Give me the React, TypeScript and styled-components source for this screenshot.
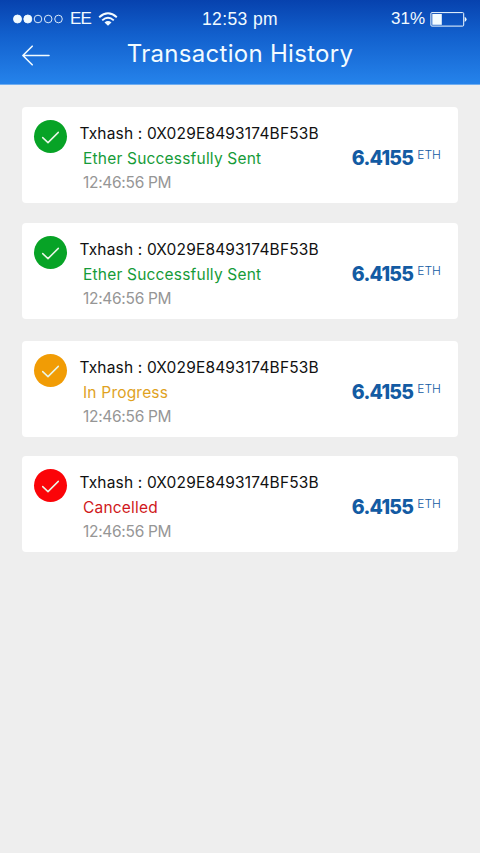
import React from "react";
import styled, { createGlobalStyle } from "styled-components";

const GlobalStyle = createGlobalStyle`
  * { box-sizing: border-box; }
  body { margin: 0; background: #eeeeee; }
`;

const Screen = styled.main`
  min-height: 853px;
  width: 480px;
  background: #eeeeee;
  font-family: Inter, "Liberation Sans", sans-serif;
`;

const Header = styled.header`
  height: 85px;
  background: linear-gradient(#0742ae 0%, #1260cd 42%, #2583eb 100%);
  border-bottom: 1px solid #70adf0;
  color: #f2fbff;
`;

const StatusBar = styled.div`
  display: grid;
  grid-template-columns: 1fr auto 1fr;
  align-items: center;
  height: 38px;
  padding: 0 13px;
  font: 17px/20px "Liberation Sans", Arial, sans-serif;
`;

const Carrier = styled.div`
  display: flex;
  align-items: center;
  gap: 7px;
  margin-right: 3px;
  letter-spacing: -0.8px;
`;

const Clock = styled.time`
  font-size: 17.5px;
  letter-spacing: 0.4px;
`;

const Battery = styled.div`
  display: flex;
  align-items: center;
  justify-content: flex-end;
  gap: 5px;
`;

const TitleBar = styled.div`
  display: grid;
  grid-template-columns: 28px 1fr 28px;
  align-items: center;
  height: 32px;
  padding: 0 22px;
`;

const BackButton = styled.button`
  display: flex;
  padding: 3px 0 0;
  border: 0;
  background: none;
  color: inherit;
`;

const Title = styled.h1`
  margin: 0;
  font-size: 24px;
  font-weight: 400;
  line-height: 32px;
  letter-spacing: 0.3px;
  text-align: center;
  white-space: nowrap;
`;

const List = styled.ul`
  list-style: none;
  margin: 0;
  padding: 22px 22px 0;
`;

const Card = styled.li<{ $gap: number }>`
  display: flex;
  height: 96px;
  margin-bottom: ${(p) => p.$gap}px;
  padding: 13px 17px 0 12px;
  border-radius: 4px;
  background: #ffffff;
`;

const StatusIcon = styled.span<{ $color: string }>`
  display: flex;
  align-items: center;
  justify-content: center;
  flex: none;
  width: 33px;
  height: 33px;
  border-radius: 50%;
  background: ${(p) => p.$color};
`;

const Details = styled.div`
  display: flex;
  flex-direction: column;
  flex: 1;
  padding-left: 13px;
  white-space: nowrap;
`;

const Hash = styled.div`
  height: 26px;
  font-size: 15.5px;
  line-height: 27px;
  letter-spacing: 0.17px;
  margin-left: -0.5px;
  color: #111111;
`;

const Status = styled.div<{ $color: string }>`
  height: 25px;
  padding-left: 3px;
  font-size: 15.5px;
  line-height: 25px;
  letter-spacing: 0.2px;
  color: ${(p) => p.$color};
`;

const Time = styled.div`
  height: 23px;
  padding-left: 3px;
  font-size: 15.5px;
  line-height: 23px;
  letter-spacing: -0.3px;
  color: #969696;
`;

const Amount = styled.div`
  display: flex;
  align-items: flex-start;
  gap: 4px;
  padding-top: 24px;
  color: #135ba3;
`;

const Value = styled.strong`
  font-size: 19.5px;
  font-weight: 800;
  line-height: 28px;
  letter-spacing: -0.7px;
`;

const Unit = styled.span`
  font-size: 12px;
  font-weight: 300;
  line-height: 21px;
`;

const transactions = [
  { status: "Ether Successfully Sent", icon: "#07a326", text: "#169b38", gap: 20 },
  { status: "Ether Successfully Sent", icon: "#07a326", text: "#169b38", gap: 22 },
  { status: "In Progress", icon: "#f19c05", text: "#e0a21e", gap: 19 },
  { status: "Cancelled", icon: "#fb0408", text: "#d01820", gap: 0 },
];

const SignalDots = () => (
  <svg width="50" height="10" viewBox="0 0 50 10" stroke="currentColor" strokeWidth="0.9">
    {[4.5, 14.8, 25, 35.2, 45.5].map((x, i) => (
      <circle key={x} cx={x} cy="5" r={i < 2 ? 4 : 3.8} fill={i < 2 ? "currentColor" : "none"} />
    ))}
  </svg>
);

const WifiIcon = () => (
  <svg width="20" height="14" viewBox="0 0 20 14" fill="none" stroke="currentColor" strokeWidth="1.9">
    <path d="M1.2 5.2Q10-2.5 18.8 5.2M4.2 8.4Q10 3.2 15.8 8.4" />
    <path d="M6.5 10.4Q10 7.6 13.5 10.4L10 13.8Z" fill="currentColor" stroke="none" />
  </svg>
);

const BatteryIcon = () => (
  <svg width="37" height="15" viewBox="0 0 37 15" fill="none">
    <rect x="0.9" y="0.6" width="32.8" height="13.5" rx="1" stroke="currentColor" />
    <rect x="2.3" y="2" width="9.5" height="10.8" fill="currentColor" />
    <path d="M34.7 4.8Q38.5 7.4 34.7 10Z" fill="currentColor" />
  </svg>
);

const BackArrow = () => (
  <svg width="28" height="21" viewBox="0 0 28 21" fill="none" stroke="currentColor" strokeWidth="1.6" strokeLinecap="round" strokeLinejoin="round">
    <path d="M27 10.5H1M10.2 1.2L0.9 10.5L10.2 19.8" />
  </svg>
);

const CheckIcon = () => (
  <svg width="19" height="15" viewBox="0 0 19 15" fill="none" stroke="#e9f6e7" strokeWidth="1.5" strokeLinecap="round" strokeLinejoin="round">
    <path d="M1.7 8.6L7 13.6L17.3 3.4" />
  </svg>
);

export default function App() {
  return (
    <>
      <GlobalStyle />
      <Screen>
        <Header>
          <StatusBar>
            <Carrier><SignalDots /><span>EE</span><WifiIcon /></Carrier>
            <Clock>12:53 pm</Clock>
            <Battery><span>31%</span><BatteryIcon /></Battery>
          </StatusBar>
          <TitleBar>
            <BackButton aria-label="Back"><BackArrow /></BackButton>
            <Title>Transaction History</Title>
          </TitleBar>
        </Header>
        <List>
          {transactions.map((tx, i) => (
            <Card key={i} $gap={tx.gap}>
              <StatusIcon $color={tx.icon}><CheckIcon /></StatusIcon>
              <Details>
                <Hash>Txhash : 0X029E8493174BF53B</Hash>
                <Status $color={tx.text}>{tx.status}</Status>
                <Time>12:46:56 PM</Time>
              </Details>
              <Amount><Value>6.4155</Value><Unit>ETH</Unit></Amount>
            </Card>
          ))}
        </List>
      </Screen>
    </>
  );
}
